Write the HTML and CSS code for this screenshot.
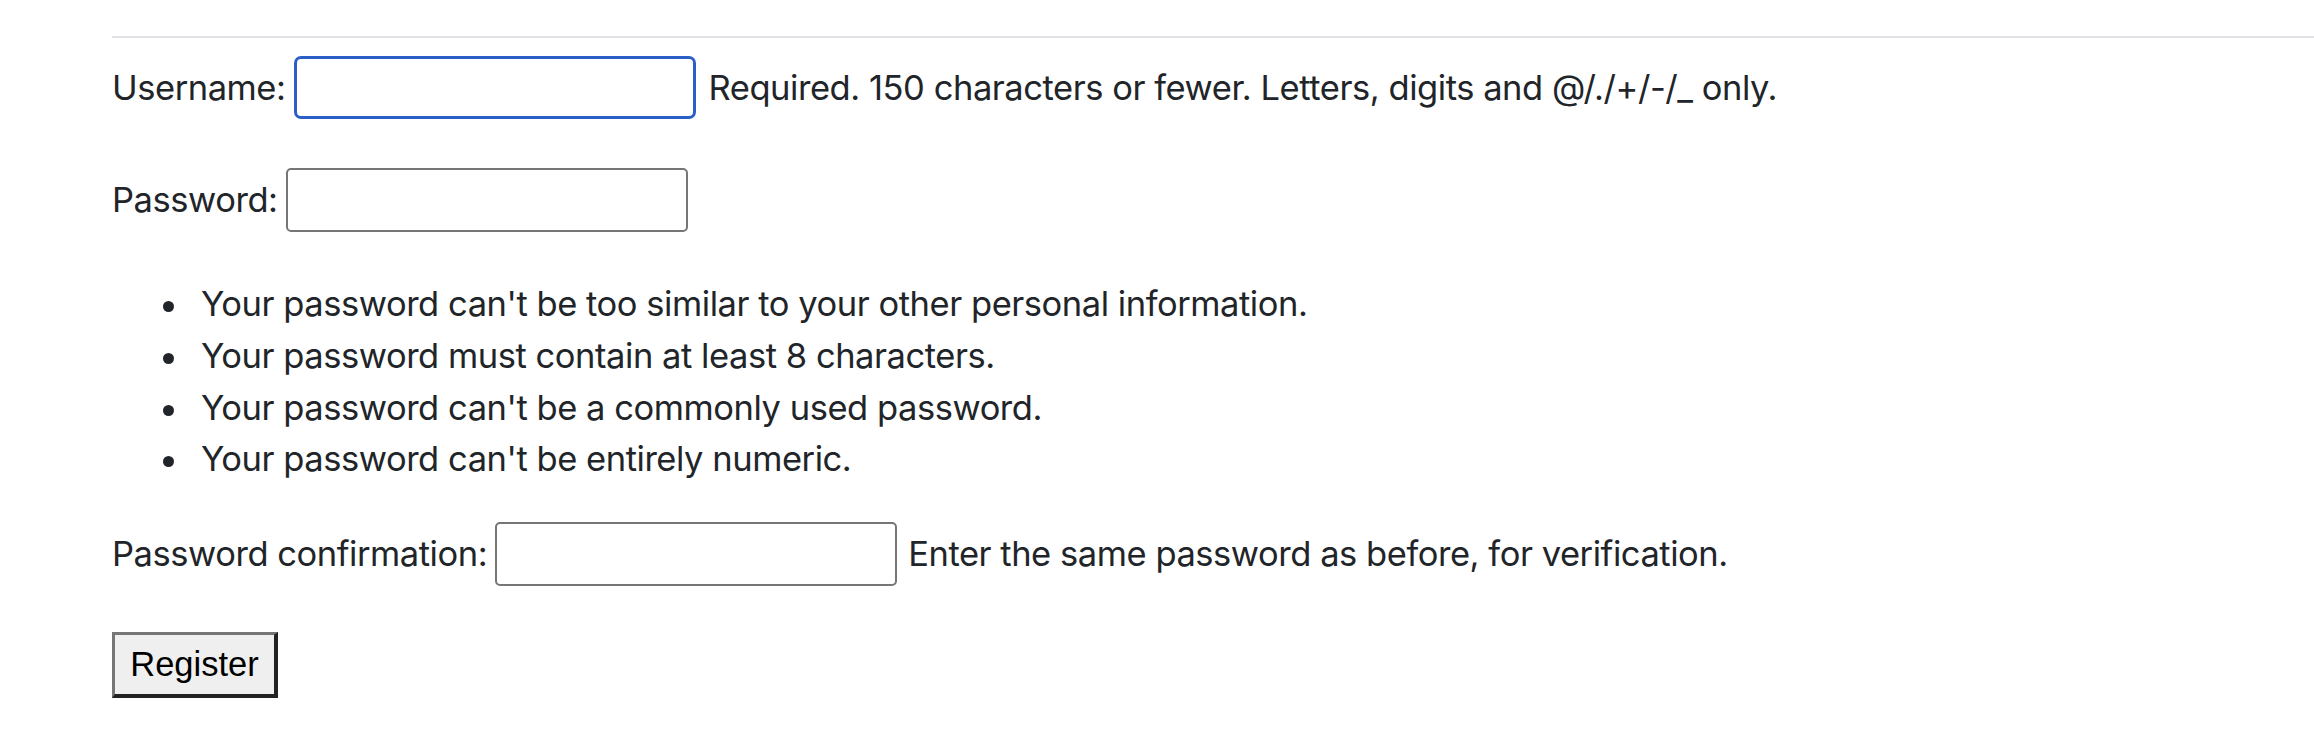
FILE: index.html
```html
<!DOCTYPE html>
<html lang="en">
<head>
<meta charset="utf-8">
<title>Register</title>
<link rel="stylesheet" href="styles.css">
</head>
<body>
<div class="page">
  <hr class="rule">
  <form class="form">
    <p class="row row-user">
      <label class="label" for="id_username">Username:</label>
      <input class="field field-focus" type="text" id="id_username">
      <span class="help">Required. 150 characters or fewer. Letters, digits and @/./+/-/_ only.</span>
    </p>
    <p class="row row-pass">
      <label class="label" for="id_password1">Password:</label>
      <input class="field" type="password" id="id_password1">
    </p>
    <ul class="rules">
      <li>Your password can't be too similar to your other personal information.</li>
      <li>Your password must contain at least 8 characters.</li>
      <li>Your password can't be a commonly used password.</li>
      <li>Your password can't be entirely numeric.</li>
    </ul>
    <p class="row row-confirm">
      <label class="label" for="id_password2">Password confirmation:</label>
      <input class="field" type="password" id="id_password2">
      <span class="help">Enter the same password as before, for verification.</span>
    </p>
    <button class="submit" type="button">Register</button>
  </form>
</div>
</body>
</html>
```

FILE: styles.css
```css
html, body {
  margin: 0;
  padding: 0;
  background: #ffffff;
}

body {
  font-family: Inter, "Noto Sans", sans-serif;
  font-size: 34.5px;
  line-height: 1.5;
  letter-spacing: -0.45px;
  color: #212529;
}

.page {
  padding-left: 112px;
  padding-top: 36px;
}

.rule {
  margin: 0;
  border: 0;
  height: 2px;
  background: #dfe1e5;
}

.form {
  margin: 0;
}

.row {
  display: flex;
  align-items: center;
  margin: 0;
}

.row-user {
  margin-top: 18px;
  height: 63px;
}

.row-pass {
  margin-top: 49px;
  height: 64px;
}

.row-confirm {
  margin-top: 37px;
  height: 64px;
}

.label {
  margin-right: 8px;
}

.field {
  box-sizing: border-box;
  width: 402px;
  height: 64px;
  margin: 0 11px 0 0;
  padding: 0 8px;
  border: 2px solid #767676;
  border-radius: 5px;
  background: #ffffff;
  font: inherit;
  outline: none;
}

.field-focus {
  height: 63px;
  border: 3px solid #2b5fc7;
  border-radius: 7px;
  margin-right: 13px;
}

.rules {
  margin: 46px 0 0 0;
  padding-left: 89px;
  list-style: none;
}

.rules li {
  line-height: 51.75px;
}

.rules li::before {
  content: "";
  display: inline-block;
  width: 11px;
  height: 11px;
  border-radius: 50%;
  background: #212529;
  vertical-align: middle;
  margin-left: -38px;
  margin-right: 27px;
}

.submit {
  display: block;
  box-sizing: border-box;
  margin-top: 46px;
  width: 166px;
  height: 66px;
  padding: 0;
  font-family: "Liberation Sans", Arial, sans-serif;
  font-size: 34.5px;
  letter-spacing: 0;
  color: #000000;
  background: #efefef;
  border-style: solid;
  border-width: 3px 4px 4px 3px;
  border-color: #767676 #222222 #222222 #767676;
  border-radius: 0;
}
```
